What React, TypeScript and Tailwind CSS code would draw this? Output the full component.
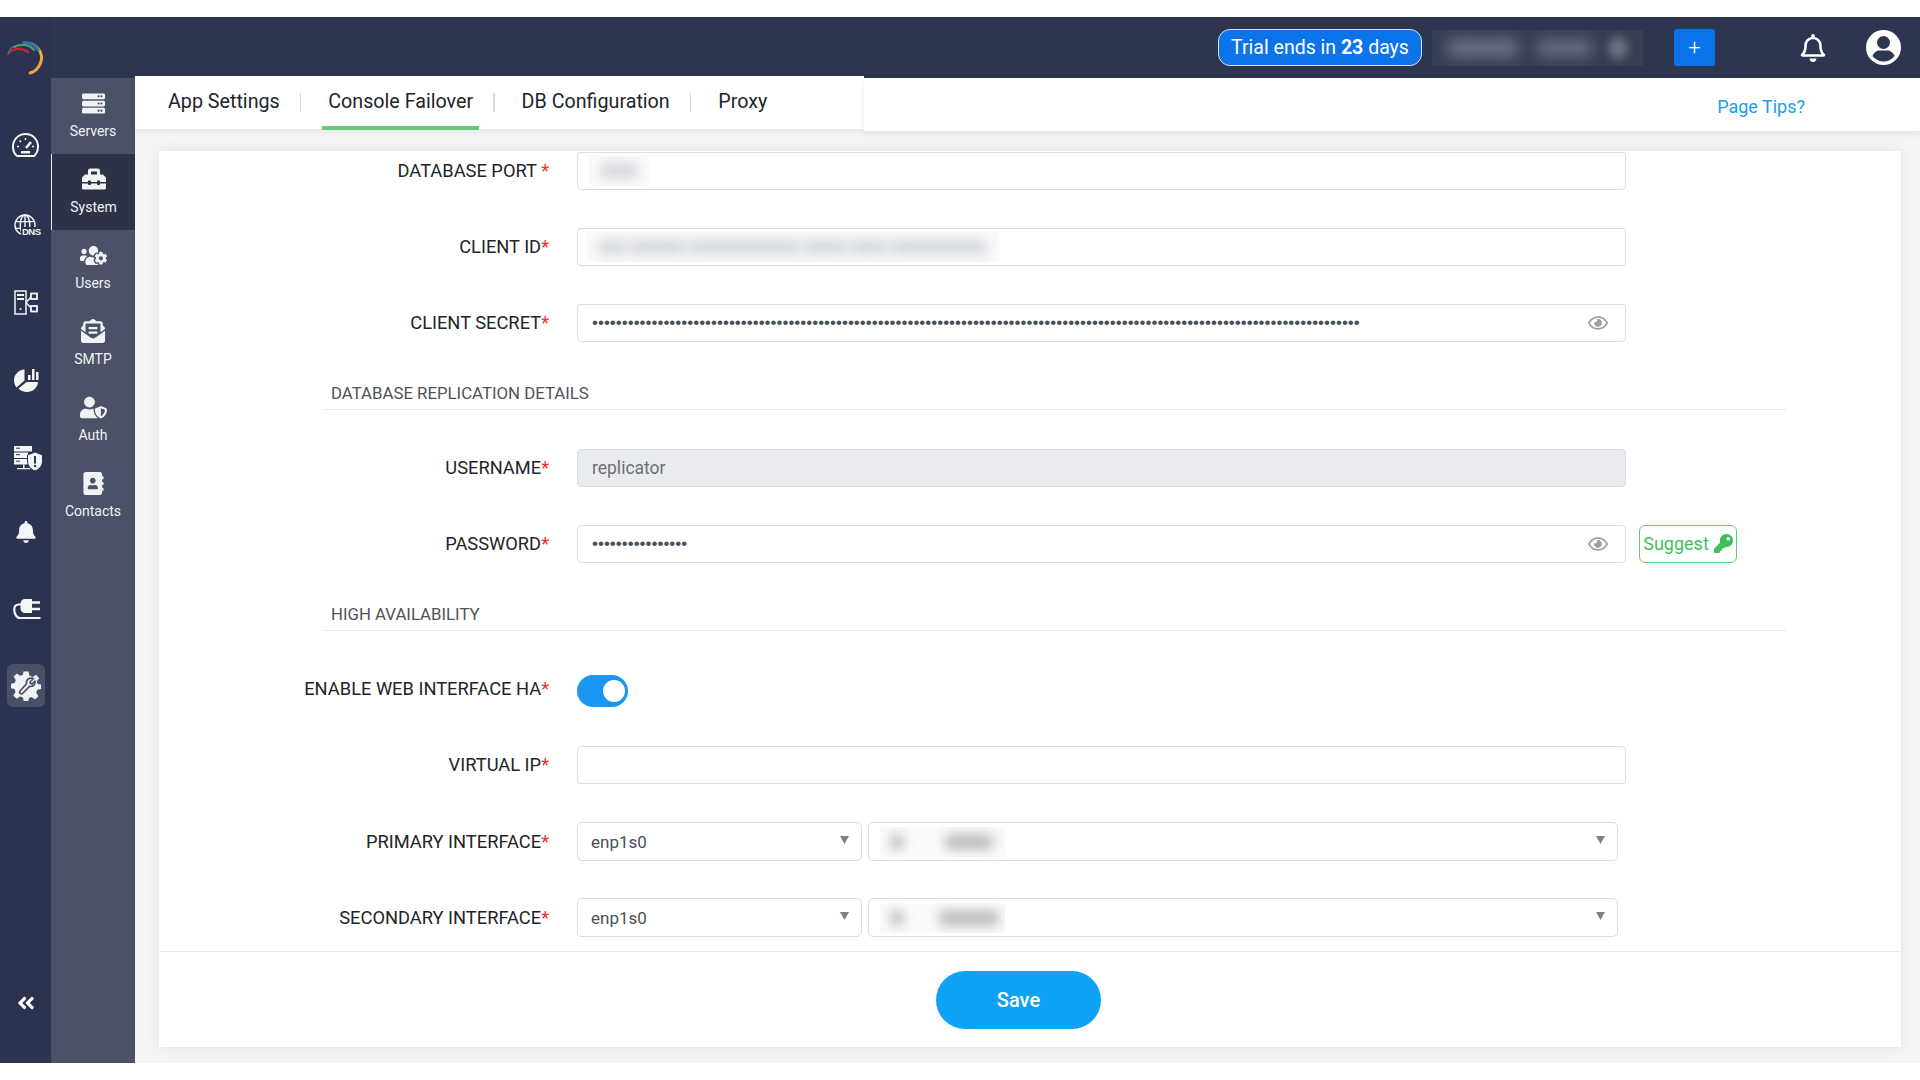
import React from "react";
import {
  FaAddressBook,
  FaAngleDoubleLeft,
  FaBell,
  FaEnvelopeOpenText,
  FaKey,
  FaRegBell,
  FaRegEye,
  FaServer,
  FaToolbox,
  FaUserShield,
  FaUsersCog,
} from "react-icons/fa";

const font = "font-['Roboto','Liberation_Sans',sans-serif]";

// logo swirl
const Logo = () => (
  <svg width="38" height="34" viewBox="0 0 38 34" fill="none" strokeLinecap="round">
    <path d="M25 3 C33 7 37 15 33 23 C31 28 27 31 23 32" stroke="#f0a93c" strokeWidth="3" />
    <path d="M17 1.5 C23 1.5 28 4 31 9" stroke="#2f6fc0" strokeWidth="3" />
    <path d="M7 6 C13 2.5 22 3 27 9" stroke="#4f9a6a" strokeWidth="2.2" />
    <path d="M2 12 C7 7 15 6.5 21 11" stroke="#c8232c" strokeWidth="2.2" />
    <path d="M5 6 C3 8 2 10 1 13" stroke="#59606f" strokeWidth="1.6" />
  </svg>
);

const GaugeIcon = () => (
  <svg className="-mt-[3px]" width="27" height="25" viewBox="0 0 27 25" fill="none" stroke="#f4f5f7" strokeWidth="2">
    <path d="M5 23 C2.500 21 1 17 1 13.500 C1 6.500 6.500 1 13.500 1 C20.500 1 26 6.500 26 13.500 C26 17 24.500 21 22 23 Z" />
    <path d="M14 15 L19 9" strokeWidth="2.600" />
    <path d="M5 13.500 H7 M20 13.500 H22 M13.500 5 V7 M7.500 7.500 L9 9" strokeWidth="1.500" />
    <rect x="9" y="18" width="9" height="2.500" fill="#f4f5f7" stroke="none" />
  </svg>
);

const DnsIcon = () => (
  <div className="flex items-end w-[27px] h-[24px] relative ml-[3px]">
    <svg width="22" height="22" viewBox="0 0 23 23" fill="none" stroke="#f4f5f7" strokeWidth="1.500">
      <circle cx="11.500" cy="11.500" r="10.500" />
      <ellipse cx="11.500" cy="11.500" rx="5" ry="10.500" />
      <path d="M1.500 8 H21.500 M1.500 15 H21.500 M11.500 1 V22" />
    </svg>
    <span className="absolute right-0 bottom-[-1px] bg-[#2b3350] pl-[1px] font-['Liberation_Sans',sans-serif] text-[9.5px] leading-[10px] font-bold tracking-[-0.5px] text-[#f4f5f7]">
      DNS
    </span>
  </div>
);

const NetworkIcon = () => (
  <svg className="mt-[3px]" width="24" height="25" viewBox="0 0 24 25" fill="none" stroke="#f4f5f7" strokeWidth="1.500">
    <rect x="1" y="1" width="11" height="23" />
    <path d="M3 5 H10 M3 9 H10" strokeWidth="2" />
    <circle cx="6.500" cy="19" r="1" fill="#f4f5f7" stroke="none" />
    <rect x="17" y="3.500" width="6" height="5.500" strokeWidth="1.800" />
    <rect x="17" y="16" width="6" height="5.500" strokeWidth="1.800" />
    <path d="M12 12.500 L17 7 M12 12.500 L17 18" />
  </svg>
);

const PieIcon = () => (
  <svg className="ml-[1px] mt-[3px]" width="25" height="25" viewBox="0 0 25 25" fill="#f4f5f7">
    <path d="M10.500 2.500 V13.500 L2.500 20.500 C0.500 18 0 15.500 0 13 C0 7.500 4.500 3 10.500 2.500 Z" />
    <path d="M12.500 15 H24 C23.500 21 18.500 25 13 25 C9.500 25 6.500 23.500 4.500 21.500 Z" />
    <rect x="14" y="8" width="2.500" height="5" />
    <rect x="18" y="2" width="2.500" height="11" />
    <rect x="22" y="5" width="2.500" height="8" />
  </svg>
);

const ServerShieldIcon = () => (
  <svg className="ml-[6px] mt-[7px]" width="29" height="25" viewBox="0 0 29 25" fill="#f4f5f7">
    <rect x="0" y="0" width="18" height="5.500" rx="0.500" />
    <rect x="0" y="6.500" width="14" height="5.500" rx="0.500" />
    <rect x="0" y="13" width="14" height="5.500" rx="0.500" />
    <path d="M9 18.500 H10.500 V22 H16 V23.200 H3 V22 H9 Z" />
    <path d="M2 2.200 H6 M2 8.700 H6 M2 15.200 H6" stroke="#2b3350" strokeWidth="1" />
    <path d="M21 6 L28.500 9 V15 C28.500 20 25 23.500 21 25 C17 23.500 13.500 20 13.500 15 V9 Z" stroke="#2b3350" strokeWidth="1" />
    <rect x="20" y="10" width="2" height="7.500" fill="#2b3350" />
    <circle cx="21" cy="20" r="1.200" fill="#2b3350" />
  </svg>
);

const PlugIcon = () => (
  <svg className="ml-[3px]" width="28" height="22" viewBox="0 0 28 22" fill="none" stroke="#f4f5f7">
    <path d="M12 1 H19 V15 H12 C9.500 15 7.500 13 7.500 10.500 V5.500 C7.500 3 9.500 1 12 1 Z" fill="#f4f5f7" stroke="none" />
    <path d="M19 4.500 H27 M19 11 H27" strokeWidth="2.600" />
    <path d="M8 6.500 H6 C3 6.500 1.200 8.500 1.200 11.500 C1.200 14.500 3 20 7 20 H27.500" strokeWidth="2.200" />
  </svg>
);

const GearWrenchIcon = () => (
  <svg width="30" height="30" viewBox="0 0 30 30">
    <path
      fill="#f1f2f4"
      d="M12.500 0.500 H17.500 L18.500 4.700 L21.600 6 L25.200 3.700 L28.200 7.300 L25.700 10.500 L26.700 13 L30 13.500 V18 L26.300 18.800 L25.200 21.700 L27.500 25.200 L24 28.200 L20.500 26 L18 27 L17.300 30 H12.700 L12 26.500 L9 25.500 L5.700 27.800 L2.300 24.500 L4.500 21 L3.500 18 L0 17.300 V12.800 L3.700 12 L4.800 9 L2.500 5.700 L5.800 2.500 L9.300 4.700 L11.800 3.700 Z"
    />
    <path
      fill="none"
      stroke="#4a5068"
      strokeWidth="1.700"
      strokeLinejoin="round"
      d="M22.500 7.500 L19 11 L19.500 12.500 L21 13 L24 10 C24.500 13 22.500 15.500 19.500 15.500 L18.500 15.300 L11.500 22.500 C10 24 7.500 21.500 9 20 L15.500 12.800 C14.700 9 18 6 22.500 7.500 Z"
    />
  </svg>
);

const UserCircle = () => (
  <svg width="35" height="35" viewBox="0 0 35 35">
    <circle cx="17.500" cy="17.500" r="17.500" fill="#fff" />
    <circle cx="17.500" cy="12.500" r="6.500" fill="#2d3550" />
    <path d="M6.500 26 C7.500 22.500 11 20.500 14 20.500 H21 C24 20.500 27.500 22.500 28.500 26 C26 29.500 22 31.500 17.500 31.500 C13 31.500 9 29.500 6.500 26 Z" fill="#2d3550" />
  </svg>
);

const railIcons = [
  <GaugeIcon />,
  <DnsIcon />,
  <NetworkIcon />,
  <PieIcon />,
  <ServerShieldIcon />,
  <FaBell className="text-[#f4f5f7] text-[22px]" />,
  <PlugIcon />,
];

const subItems = [
  { label: "Servers", icon: <FaServer className="text-[23px]" /> },
  { label: "System", icon: <FaToolbox className="text-[24px]" />, active: true },
  { label: "Users", icon: <FaUsersCog className="text-[27px]" /> },
  { label: "SMTP", icon: <FaEnvelopeOpenText className="text-[24px]" /> },
  { label: "Auth", icon: <FaUserShield className="text-[27px]" /> },
  { label: "Contacts", icon: <FaAddressBook className="text-[23px]" /> },
];

const Rail = () => (
  <div className="w-[51px] shrink-0 bg-[#2b3350] flex flex-col items-center">
    <div className="mt-[24px] h-[34px] flex items-center">
      <Logo />
    </div>
    <div className="mt-[33px] w-full flex flex-col items-center">
      {railIcons.map((icon, i) => (
        <div key={i} className="h-[77px] w-full flex items-center justify-center">
          {icon}
        </div>
      ))}
      <div className="h-[77px] w-full flex items-center justify-center">
        <div className="w-[38px] h-[43px] rounded-[6px] bg-[#4a5068] flex items-center justify-center">
          <GearWrenchIcon />
        </div>
      </div>
    </div>
    <div className="mt-auto mb-[50px] text-white text-[20px]">
      <FaAngleDoubleLeft />
    </div>
  </div>
);

const Header = () => (
  <div className={`h-[61px] shrink-0 bg-[#2d3550] flex items-center ${font}`}>
    <div className="ml-auto flex items-center">
      <div className="w-[204px] h-[37px] rounded-[12px] border-[1.5px] border-[#dbe4f0] bg-[#0b74ea] flex items-center justify-center text-white text-[19.5px]">
        <span>
          Trial ends in <b className="font-bold">23</b> days
        </span>
      </div>
      <div className="ml-[10px] w-[211px] h-[36px] bg-[#383f56] overflow-hidden flex items-center pl-[14px] gap-[16px]">
        <div className="w-[74px] h-[18px] rounded-full bg-[#6a6e80] blur-[7px] shrink-0" />
        <div className="w-[57px] h-[16px] rounded-full bg-[#6a6e80] blur-[7px] shrink-0" />
        <div className="w-[18px] h-[22px] rounded-full bg-[#72757f] blur-[5px] shrink-0" />
      </div>
      <div className="ml-[31px] w-[41px] h-[37px] rounded-[3px] bg-[#0b74ea] flex items-center justify-center text-white text-[22px] font-light leading-none">
        +
      </div>
      <FaRegBell className="ml-[84px] text-white text-[28px]" />
      <div className="ml-[39px] mr-[19px]">
        <UserCircle />
      </div>
    </div>
  </div>
);

const SubNav = () => (
  <div className={`w-[84px] shrink-0 bg-[#4b5268] ${font}`}>
    {subItems.map((item) => (
      <div
        key={item.label}
        className={`h-[76px] pt-[10px] flex flex-col items-center text-[14px] leading-[18px] text-[#f1f2f5] ${
          item.active ? "bg-[#2e3247] border-l-[1.5px] border-[#e6e8ee]" : ""
        }`}
      >
        <div className="h-[30px] flex items-center justify-center">{item.icon}</div>
        <span className="mt-[4px]">{item.label}</span>
      </div>
    ))}
  </div>
);

const tabs = ["App Settings", "Console Failover", "DB Configuration", "Proxy"];

const TopBar = () => (
  <div className="h-[55px] shrink-0 flex items-start">
    <div className="w-[729px] h-[53px] -mt-[2px] pb-[1px] bg-white flex items-center pl-[33px] relative z-10 shadow-[0_2px_6px_rgba(0,0,0,0.07)]">
      {tabs.map((tab, i) => (
        <React.Fragment key={tab}>
          {i > 0 && <div className="w-[1.5px] h-[19px] bg-[#d5d7db] ml-[20px] mr-[27px] shrink-0" />}
          <div className="relative text-[19.7px] leading-[24px] text-[#212529] whitespace-nowrap">
            {tab}
            {i === 1 && (
              <div className="absolute left-[-6px] right-[-6px] top-[36px] h-[4px] bg-[#67c97c]" />
            )}
          </div>
        </React.Fragment>
      ))}
    </div>
    <div className="flex-1 h-[54px] bg-white flex items-center justify-end pr-[115px] text-[18px] text-[#1a9fe8] border-b-[1.5px] border-[#e4e5e7] relative z-10 shadow-[0_2px_6px_rgba(0,0,0,0.07)]">
      <span className="mt-[3px]">Page Tips?</span>
    </div>
  </div>
);

const Label = ({ text, space }: { text: string; space?: boolean }) => (
  <div className="w-[390px] shrink-0 text-right text-[18.3px] leading-[22px] text-[#212529] whitespace-nowrap">
    {text}
    {space ? " " : ""}
    <span className="text-[#f52a2a]">*</span>
  </div>
);

const boxCls =
  "h-[38px] border-[1.5px] border-[#d8dce3] rounded-[4px] bg-white relative flex items-center";

const Blur = ({
  width,
  blobs,
  gap = 0,
  color = "#d6d9dd",
}: {
  width: number;
  blobs: number[];
  gap?: number;
  color?: string;
}) => (
  <div
    className="h-[30px] bg-[#fafafa] flex items-center overflow-hidden px-[10px]"
    style={{ width, gap }}
  >
    {blobs.map((b, i) => (
      <div
        key={i}
        className="h-[16px] rounded-full blur-[6px] shrink-0"
        style={{ width: b, backgroundColor: color }}
      />
    ))}
  </div>
);

const PasswordBox = ({ count }: { count: number }) => (
  <div className={`${boxCls} w-[1049px]`}>
    <input
      type="password"
      readOnly
      defaultValue={"x".repeat(count)}
      className="w-[990px] pl-[14px] text-[17px] text-[#495057] outline-none bg-transparent font-['Liberation_Sans',sans-serif]"
    />
    <FaRegEye className="absolute right-[17px] top-[8px] text-[#9b9ea3] text-[20px]" />
  </div>
);

const Arrow = () => (
  <svg className="absolute right-[12px] top-[13px]" width="9" height="8" viewBox="0 0 9 8">
    <path d="M0 0 H9 L4.500 8 Z" fill="#7d8086" />
  </svg>
);

const SelectRow = ({ label, blobs, gap, bottom }: { label: string; blobs: number[]; gap: number; bottom: string }) => (
  <div className={`flex items-center h-[39px] ${bottom}`}>
    <Label text={label} />
    <div className="w-[28px] shrink-0" />
    <div className={`${boxCls} !h-[39px] w-[285px] rounded-[5px]`}>
      <span className="pl-[13px] pt-[2px] text-[17px] text-[#495057]">enp1s0</span>
      <Arrow />
    </div>
    <div className={`${boxCls} !h-[39px] w-[750px] ml-[6px] rounded-[5px] pl-[11px]`}>
      <Blur width={125} blobs={blobs} gap={gap} color="#bdbdbd" />
      <Arrow />
    </div>
  </div>
);

const SectionHead = ({ text }: { text: string }) => (
  <div className="ml-[165px] mr-[115px] h-[30px] border-b-[1.5px] border-[#e6e8eb] pl-[7px] text-[16.8px] leading-[27px] text-[#4f5357]">
    {text}
  </div>
);

const Form = () => (
  <div className={`flex-1 min-h-0 bg-[#f4f4f5] pl-[24px] pr-[19px] pt-[18px] pb-[16px] ${font}`}>
    <div className="h-full bg-white flex flex-col shadow-[0_0_14px_rgba(0,0,0,0.07)]">
      <div className="flex-1 pt-[1px]">
        <div className="flex items-center h-[38px] mb-[38px]">
          <Label text="DATABASE PORT" space />
          <div className="w-[28px] shrink-0" />
          <div className={`${boxCls} w-[1049px] pl-[11px]`}>
            <Blur width={60} blobs={[40]} />
          </div>
        </div>
        <div className="flex items-center h-[38px] mb-[38px]">
          <Label text="CLIENT ID" />
          <div className="w-[28px] shrink-0" />
          <div className={`${boxCls} w-[1049px] pl-[9px]`}>
            <Blur width={412} blobs={[30, 60, 115, 46, 40, 100]} />
          </div>
        </div>
        <div className="flex items-center h-[38px]">
          <Label text="CLIENT SECRET" />
          <div className="w-[28px] shrink-0" />
          <PasswordBox count={129} />
        </div>

        <div className="mt-[38px]">
          <SectionHead text="DATABASE REPLICATION DETAILS" />
        </div>

        <div className="flex items-center h-[38px] mt-[39px] mb-[38px]">
          <Label text="USERNAME" />
          <div className="w-[28px] shrink-0" />
          <div className={`${boxCls} !bg-[#e9ebef] w-[1049px] pl-[14px] text-[17.5px] text-[#6c7075]`}>
            replicator
          </div>
        </div>
        <div className="flex items-center h-[38px]">
          <Label text="PASSWORD" />
          <div className="w-[28px] shrink-0" />
          <PasswordBox count={16} />
          <button className="ml-[13px] w-[98px] h-[38px] pb-[1px] rounded-[6px] border-[1.5px] border-[#5ccb73] text-[#3fbf5c] text-[18px] flex items-center justify-center gap-[5px] whitespace-nowrap">
            Suggest
            <FaKey className="text-[19px]" />
          </button>
        </div>

        <div className="mt-[38px]">
          <SectionHead text="HIGH AVAILABILITY" />
        </div>

        <div className="flex items-center h-[32px] mt-[44px] mb-[39px]">
          <div className="pb-[5px]">
            <Label text="ENABLE WEB INTERFACE HA" />
          </div>
          <div className="w-[28px] shrink-0" />
          <div className="w-[51px] h-[32px] rounded-full bg-[#1a96f4] flex items-center justify-end pr-[3px]">
            <div className="w-[22px] h-[22px] rounded-full bg-white" />
          </div>
        </div>
        <div className="flex items-center h-[38px] mb-[38px]">
          <Label text="VIRTUAL IP" />
          <div className="w-[28px] shrink-0" />
          <div className={`${boxCls} w-[1049px]`} />
        </div>
        <SelectRow label="PRIMARY INTERFACE" blobs={[14, 50]} gap={40} bottom="mb-[37px]" />
        <SelectRow label="SECONDARY INTERFACE" blobs={[14, 62]} gap={34} bottom="" />
      </div>
      <div className="h-[96px] shrink-0 border-t-[1.5px] border-[#ebedf0] flex items-center justify-center">
        <button className="mr-[23px] w-[165px] h-[58px] rounded-full bg-[#0ea2f5] text-white text-[20px] font-medium">
          Save
        </button>
      </div>
    </div>
  </div>
);

export default function App() {
  return (
    <div className="w-[1920px] h-[1080px] bg-white overflow-hidden pt-[17px] pb-[17px]">
      <div className="h-full flex">
        <Rail />
        <div className="flex-1 min-w-0 flex flex-col">
          <Header />
          <div className="flex-1 min-h-0 flex">
            <SubNav />
            <div className={`flex-1 min-w-0 flex flex-col bg-[#f4f4f5] ${font}`}>
              <TopBar />
              <Form />
            </div>
          </div>
        </div>
      </div>
    </div>
  );
}
